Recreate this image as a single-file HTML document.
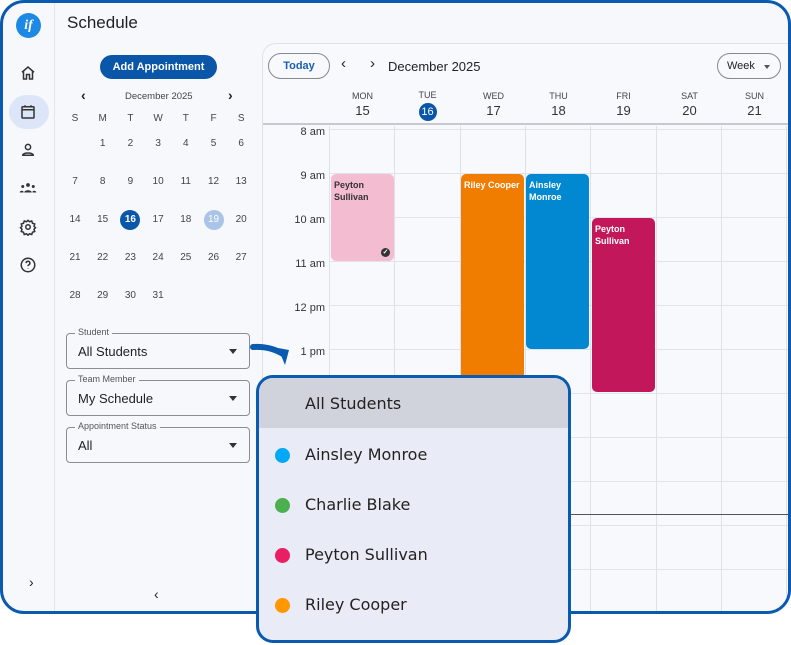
<!DOCTYPE html>
<html><head><style>
*{box-sizing:border-box;margin:0;padding:0}
body{width:791px;height:645px;background:#fff;font-family:"Liberation Sans",sans-serif;position:relative;overflow:hidden;color:#222}
.frame{position:absolute;left:0;top:0;width:791px;height:614px;border:3px solid #0a5bb0;border-radius:24px;background:#f7f8fc;overflow:hidden}
.abs{position:absolute}
.side{left:0;top:0;width:52px;height:100%;border-right:1px solid #e3e5ec}
.ic{position:absolute;left:16px;width:18px;height:18px}
.c{position:absolute;width:28px;text-align:center;font-size:10px;color:#444;line-height:20px;height:20px}
.sel{position:absolute;left:63px;width:184px;height:36px;border:1px solid #8a8d94;border-radius:4px;font-size:13px;color:#222;padding:10px 11px}
.sel .lb{position:absolute;top:-7px;left:8px;background:#f7f8fc;font-size:9px;color:#555;padding:0 3px}
.sel .ar{position:absolute;right:12px;top:15px;border:4px solid transparent;border-top:5px solid #333;border-bottom:0}
.panel{left:259px;top:40px;width:540px;height:580px;border:1px solid #dfe1e8;border-radius:14px;background:#f8f9fd;overflow:hidden}
.vl{position:absolute;top:82px;height:600px;width:1px;background:#dfe1e8}
.hl{position:absolute;left:66px;width:474px;height:1px;background:#e1e3ea}
.tl{position:absolute;left:18px;width:44px;text-align:right;font-size:11px;color:#333}
.dh{position:absolute;top:47px;width:65px;text-align:center;font-size:9px;color:#444}
.dn{position:absolute;top:59px;width:65px;text-align:center;font-size:13px;color:#333}
.ev{position:absolute;border-radius:5px;font-size:9px;font-weight:bold;padding:5px 3px;line-height:12px;color:#fff}
.pop{left:256px;top:375px;width:315px;height:268px;border:3px solid #0a5bb0;border-radius:17px;background:#e9ecf6;overflow:hidden}
.it{position:absolute;left:0;width:100%;height:50px;font-weight:500;color:#222;padding-left:46px;line-height:52px;font-family:"DejaVu Sans","Liberation Sans",sans-serif;font-size:16px}
.dot{position:absolute;left:16px;top:19px;width:15px;height:15px;border-radius:50%}
</style></head><body>
<div class="frame">
 <div class="abs side">
  <div class="abs" style="left:13px;top:10px;width:25px;height:25px;border-radius:50%;background:#1e88e5;color:#fff;font:italic bold 14px 'Liberation Serif',serif;text-align:center;line-height:25px">if</div>
  <svg class="ic" style="top:61px" viewBox="0 0 24 24" fill="none" stroke="#333" stroke-width="2"><path d="M4 11 12 4l8 7M6 10v10h4v-6h4v6h4V10"/></svg>
  <div class="abs" style="left:6px;top:92px;width:40px;height:34px;border-radius:17px;background:#dce6f8"></div>
  <svg class="ic" style="top:100px" viewBox="0 0 24 24" fill="none" stroke="#333" stroke-width="2"><rect x="4" y="5" width="16" height="15" rx="1"/><path d="M4 9h16M8 3v3M16 3v3"/></svg>
  <svg class="ic" style="top:138px" viewBox="0 0 24 24" fill="none" stroke="#333" stroke-width="2"><circle cx="12" cy="8" r="3.5"/><path d="M5 19c0-4 14-4 14 0z"/></svg>
  <svg class="ic" style="top:176px" viewBox="0 0 24 24" fill="#333"><circle cx="12" cy="8" r="2.5"/><circle cx="5" cy="10" r="2"/><circle cx="19" cy="10" r="2"/><path d="M7 18c0-4 10-4 10 0zM1 18c0-3 5-3 5-1v1zM23 18c0-3-5-3-5-1v1z"/></svg>
  <svg class="ic" style="top:215px" viewBox="0 0 24 24" fill="none" stroke="#333" stroke-width="2"><circle cx="12" cy="12" r="3"/><path d="M12 3l2 2 3-1 1 3 3 1-1 3 2 2-2 2 1 3-3 1-1 3-3-1-2 2-2-2-3 1-1-3-3-1 1-3-2-2 2-2-1-3 3-1 1-3 3 1z"/></svg>
  <svg class="ic" style="top:253px" viewBox="0 0 24 24" fill="none" stroke="#333" stroke-width="2"><circle cx="12" cy="12" r="9"/><path d="M9.5 9.5a2.5 2.5 0 1 1 3.5 2.3c-.7.4-1 .9-1 1.7M12 16.5v.5"/></svg>
  <div class="abs" style="left:26px;top:571px;font-size:14px">›</div>
 </div>
 <div class="abs" style="left:64px;top:10px;font-size:17px;color:#222">Schedule</div>
 <div class="abs" style="left:97px;top:52px;width:117px;height:24px;border-radius:12px;background:#0a56a8;color:#fff;font-size:11px;font-weight:bold;text-align:center;line-height:24px">Add Appointment</div>
 <div class="abs" style="left:78px;top:84px;font-size:14px;font-weight:bold">‹</div>
 <div class="abs" style="left:225px;top:84px;font-size:14px;font-weight:bold">›</div>
 <div class="abs" style="left:122px;top:88px;font-size:9.5px;color:#444">December 2025</div>
 <div class="abs" style="left:58px;top:106px">
  <div class="c" style="left:0;top:0">S</div><div class="c" style="left:27.7px;top:0">M</div><div class="c" style="left:55.4px;top:0">T</div><div class="c" style="left:83.1px;top:0">W</div><div class="c" style="left:110.8px;top:0">T</div><div class="c" style="left:138.5px;top:0">F</div><div class="c" style="left:166.2px;top:0">S</div>
  <div class="c" style="left:27.7px;top:25px">1</div><div class="c" style="left:55.4px;top:25px">2</div><div class="c" style="left:83.1px;top:25px">3</div><div class="c" style="left:110.8px;top:25px">4</div><div class="c" style="left:138.5px;top:25px">5</div><div class="c" style="left:166.2px;top:25px">6</div>
  <div class="c" style="left:0;top:63px">7</div><div class="c" style="left:27.7px;top:63px">8</div><div class="c" style="left:55.4px;top:63px">9</div><div class="c" style="left:83.1px;top:63px">10</div><div class="c" style="left:110.8px;top:63px">11</div><div class="c" style="left:138.5px;top:63px">12</div><div class="c" style="left:166.2px;top:63px">13</div>
  <div class="c" style="left:0;top:101px">14</div><div class="c" style="left:27.7px;top:101px">15</div><div class="c" style="left:59.4px;top:101px;width:20px;border-radius:50%;background:#0a56a8;color:#fff;font-weight:bold">16</div><div class="c" style="left:83.1px;top:101px">17</div><div class="c" style="left:110.8px;top:101px">18</div><div class="c" style="left:142.5px;top:101px;width:20px;border-radius:50%;background:#a9c4e6;color:#fff">19</div><div class="c" style="left:166.2px;top:101px">20</div>
  <div class="c" style="left:0;top:139px">21</div><div class="c" style="left:27.7px;top:139px">22</div><div class="c" style="left:55.4px;top:139px">23</div><div class="c" style="left:83.1px;top:139px">24</div><div class="c" style="left:110.8px;top:139px">25</div><div class="c" style="left:138.5px;top:139px">26</div><div class="c" style="left:166.2px;top:139px">27</div>
  <div class="c" style="left:0;top:177px">28</div><div class="c" style="left:27.7px;top:177px">29</div><div class="c" style="left:55.4px;top:177px">30</div><div class="c" style="left:83.1px;top:177px">31</div>
 </div>
 <div class="sel" style="top:330px"><span class="lb">Student</span>All Students<span class="ar"></span></div>
 <div class="sel" style="top:377px"><span class="lb">Team Member</span>My Schedule<span class="ar"></span></div>
 <div class="sel" style="top:424px"><span class="lb">Appointment Status</span>All<span class="ar"></span></div>
 <div class="abs" style="left:151px;top:583px;font-size:14px">‹</div>
 <div class="abs panel">
  <div class="abs" style="left:5px;top:9px;width:62px;height:26px;border:1px solid #888;border-radius:13px;color:#1a5fb0;font-size:11px;font-weight:bold;text-align:center;line-height:24px">Today</div>
  <div class="abs" style="left:78px;top:11px;font-size:15px">‹</div>
  <div class="abs" style="left:107px;top:11px;font-size:15px">›</div>
  <div class="abs" style="left:125px;top:15px;font-size:13px">December 2025</div>
  <div class="abs" style="left:454px;top:9px;width:64px;height:26px;border:1px solid #888;border-radius:13px;font-size:11px;padding:6px 9px">Week<span style="position:absolute;right:10px;top:11px;border:3px solid transparent;border-top:4px solid #555;border-bottom:0"></span></div>
  <div class="dh" style="left:67px">MON</div><div class="dn" style="left:67px">15</div>
  <div class="dh" style="left:132px;top:46px">TUE</div><div class="dn" style="left:132px"><span style="display:inline-block;width:18px;height:18px;border-radius:50%;background:#0a56a8;color:#fff;font-size:11px;line-height:18px">16</span></div>
  <div class="dh" style="left:198px">WED</div><div class="dn" style="left:198px">17</div>
  <div class="dh" style="left:263px">THU</div><div class="dn" style="left:263px">18</div>
  <div class="dh" style="left:328px">FRI</div><div class="dn" style="left:328px">19</div>
  <div class="dh" style="left:394px">SAT</div><div class="dn" style="left:394px">20</div>
  <div class="dh" style="left:459px">SUN</div><div class="dn" style="left:459px">21</div>
  <div class="abs" style="left:0;top:79px;width:540px;height:2px;background:#c6c9d0"></div>
  <div class="vl" style="left:66px"></div><div class="vl" style="left:131px"></div><div class="vl" style="left:197px"></div><div class="vl" style="left:262px"></div><div class="vl" style="left:327px"></div><div class="vl" style="left:393px"></div><div class="vl" style="left:458px"></div><div class="vl" style="left:523px"></div>
  <div class="hl" style="top:85px"></div><div class="hl" style="top:129px"></div><div class="hl" style="top:173px"></div><div class="hl" style="top:217px"></div><div class="hl" style="top:261px"></div><div class="hl" style="top:305px"></div><div class="hl" style="top:349px"></div><div class="hl" style="top:393px"></div><div class="hl" style="top:437px"></div><div class="hl" style="top:481px"></div><div class="hl" style="top:525px"></div>
  <div class="abs" style="left:300px;top:470px;width:240px;height:1px;background:#555"></div>
  <div class="tl" style="top:82px">8 am</div><div class="tl" style="top:126px">9 am</div><div class="tl" style="top:170px">10 am</div><div class="tl" style="top:214px">11 am</div><div class="tl" style="top:258px">12 pm</div><div class="tl" style="top:302px">1 pm</div>
  <div class="ev" style="left:68px;top:130px;width:63px;height:87px;background:#f4bcd0;color:#333">Peyton<br>Sullivan<span style="position:absolute;right:4px;bottom:4px;width:9px;height:9px;border-radius:50%;background:#333;color:#fff;font-size:7px;line-height:9px;text-align:center">✓</span></div>
  <div class="ev" style="left:198px;top:130px;width:63px;height:230px;background:#f07c00">Riley Cooper</div>
  <div class="ev" style="left:263px;top:130px;width:63px;height:175px;background:#0288d1">Ainsley<br>Monroe</div>
  <div class="ev" style="left:329px;top:174px;width:63px;height:174px;background:#c2185b">Peyton<br>Sullivan</div>
 </div>
</div>
<svg class="abs" style="left:250px;top:340px" width="40" height="30" viewBox="0 0 40 30"><path d="M3 7 Q20 6 33 14" stroke="#0a5bb0" stroke-width="6" fill="none" stroke-linecap="round"/><path d="M28 8 L39 10 L35 25 Z" fill="#0a5bb0"/></svg>
<div class="abs pop">
 <div class="it" style="top:0;background:#d0d3dc">All Students</div>
 <div class="it" style="top:51px"><span class="dot" style="background:#03a9f4"></span>Ainsley Monroe</div>
 <div class="it" style="top:101px"><span class="dot" style="background:#4caf50"></span>Charlie Blake</div>
 <div class="it" style="top:151px"><span class="dot" style="background:#e91e63"></span>Peyton Sullivan</div>
 <div class="it" style="top:201px"><span class="dot" style="background:#ff9800"></span>Riley Cooper</div>
</div>
</body></html>
